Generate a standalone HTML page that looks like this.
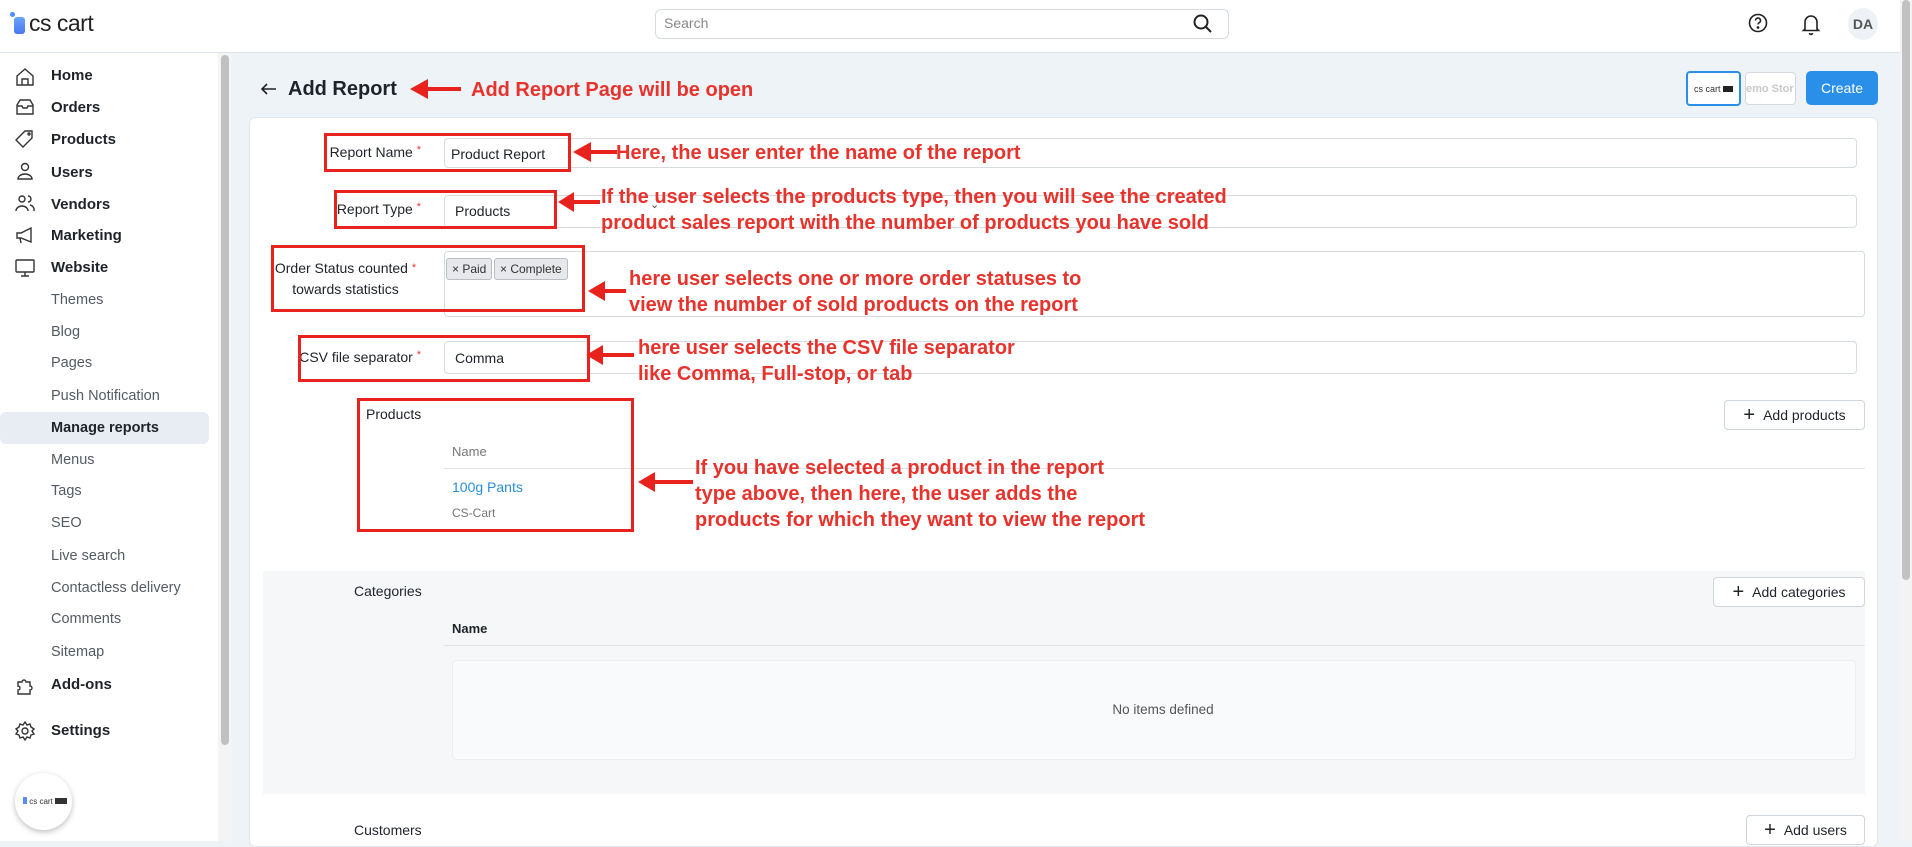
<!DOCTYPE html>
<html><head><meta charset="utf-8"><style>
*{box-sizing:border-box;margin:0;padding:0}
body{width:1912px;height:841px;overflow:hidden;background:#eef3f8;font-family:"Liberation Sans",sans-serif;color:#1f2329;position:relative}
.a{position:absolute}
.hdr{left:0;top:0;width:1900px;height:53px;background:#fff;border-bottom:1px solid #dde3ea}
.side{left:0;top:53px;width:232px;height:788px;background:#fff;border-right:1px solid #e3e8ee}
.nav{left:51px;font-size:15px;font-weight:bold;color:#1f2329}
.sub{left:51px;font-size:14.5px;color:#555b63}
.card{left:249px;top:117px;width:1629px;height:730px;background:#fff;border:1px solid #e1e6ec;border-radius:6px}
.inp{background:#fff;border:1px solid #d6dbe1;border-radius:4px}
.lbl{font-size:14px;color:#1f2329;text-align:right}
.lbl b{color:#e53935;font-weight:normal;font-size:11px;vertical-align:top}
.rb{border:3px solid #e8221c}
.ann{color:#e8322c;font-weight:bold;font-size:20px;line-height:26px;white-space:nowrap}
.btn{background:#fff;border:1px solid #cfd5dc;border-radius:4px;font-size:14px;color:#1f2329;display:flex;align-items:center;justify-content:center;gap:8px}
.btn span{font-size:20px;font-weight:300;line-height:14px}
.tag{background:#e6e8eb;border:1px solid #b9bec4;border-radius:3px;font-size:12px;color:#333;padding:3px 5px}
</style></head><body>
<div class="a hdr"></div>
<div class="a" style="left:10px;top:12px;width:5px;height:5px;border-radius:50%;background:#4c8df6"></div>
<div class="a" style="left:14px;top:17px;width:11px;height:17px;border-radius:3px;background:linear-gradient(#6aa4ff,#4a76ee)"></div>
<div class="a" style="left:29px;top:10px;font-size:23px;color:#222;letter-spacing:-.5px">cs cart</div>
<div class="a inp" style="left:655px;top:9px;width:574px;height:30px;border-radius:6px"></div>
<div class="a" style="left:664px;top:15px;font-size:14px;color:#888">Search</div>
<svg class="a" style="left:1192px;top:13px" width="22" height="22" viewBox="0 0 22 22" fill="none" stroke="#222" stroke-width="2"><circle cx="9" cy="9" r="6.5"/><path d="M14 14l5 5"/></svg>
<svg class="a" style="left:1747px;top:12px" width="22" height="22" viewBox="0 0 22 22" fill="none" stroke="#222" stroke-width="1.6"><circle cx="11" cy="11" r="8.5"/><path d="M8.5 8.5a2.5 2.5 0 1 1 3.5 2.3c-.7.4-1 .9-1 1.7"/><circle cx="11" cy="15.5" r=".6" fill="#222"/></svg>
<svg class="a" style="left:1800px;top:12px" width="22" height="24" viewBox="0 0 22 24" fill="none" stroke="#222" stroke-width="1.6"><path d="M5 17V10a6 6 0 0 1 12 0v7l1.5 1.5h-15z"/><path d="M9.5 21a1.5 1.5 0 0 0 3 0"/></svg>
<div class="a" style="left:1848px;top:8px;width:30px;height:32px;border-radius:50%;background:#eef2f6;font-size:14px;font-weight:bold;color:#555;display:flex;align-items:center;justify-content:center">DA</div>
<div class="a" style="left:1900px;top:0;width:12px;height:841px;background:#f3f3f3"></div>
<div class="a" style="left:1902px;top:0;width:8px;height:580px;background:#c2c2c2;border-radius:4px"></div>

<div class="a side"></div>
<div class="a" style="left:218px;top:53px;width:14px;height:788px;background:#f4f4f4"></div>
<div class="a" style="left:221px;top:55px;width:8px;height:690px;background:#c1c1c1;border-radius:4px"></div>
<div class="a" style="left:0;top:412px;width:209px;height:32px;background:#e8edf3;border-radius:6px"></div>
<svg class="a" style="left:14px;top:64px" width="22" height="700" viewBox="0 0 22 700" fill="none" stroke="#333" stroke-width="1.4">
<path d="M3 12l8-7 8 7v9H3z M8 21v-6h6v6"/>
<g transform="translate(0,32)"><path d="M3 9l3-5h10l3 5v9H3z M3 10h5l1 2h4l1-2h5"/></g>
<g transform="translate(0,64)"><path d="M11 3h7v7l-9 9-7-7z"/><circle cx="15" cy="6" r="1"/></g>
<g transform="translate(0,96)"><circle cx="11" cy="7" r="3.5"/><path d="M4 19a7 5 0 0 1 14 0z"/></g>
<g transform="translate(0,128)"><circle cx="8" cy="7" r="3"/><path d="M2 19a6 5 0 0 1 12 0M14 4a3 3 0 0 1 0 6M16 13a5 5 0 0 1 4 6"/></g>
<g transform="translate(0,160)"><path d="M3 9h4l10-5v14L7 14H3z M6 14l1 5"/></g>
<g transform="translate(0,192)"><rect x="2" y="4" width="18" height="12" rx="1"/><path d="M11 16v4M7 20h8"/></g>
<g transform="translate(0,610)"><path d="M4 8h4a2 2 0 1 1 4 0h4v4a2 2 0 1 1 0 4v4H4v-4a2 2 0 1 0 0-4z"/></g>
<g transform="translate(0,656)"><circle cx="11" cy="11" r="3"/><path d="M11 2l2 3 3-1 1 3 3 2-2 2 2 3-3 1-1 3-3-1-2 3-2-3-3 1-1-3-3-1 2-3-2-2 3-2 1-3 3 1z"/></g>
</svg>
<div class="a nav" style="top:67px">Home</div>
<div class="a nav" style="top:99px">Orders</div>
<div class="a nav" style="top:131px">Products</div>
<div class="a nav" style="top:164px">Users</div>
<div class="a nav" style="top:196px">Vendors</div>
<div class="a nav" style="top:227px">Marketing</div>
<div class="a nav" style="top:259px">Website</div>
<div class="a sub" style="top:292px">Themes</div>
<div class="a sub" style="top:324px">Blog</div>
<div class="a sub" style="top:355px">Pages</div>
<div class="a sub" style="top:388px">Push Notification</div>
<div class="a sub" style="top:420px;font-weight:bold;color:#1f2329">Manage reports</div>
<div class="a sub" style="top:452px">Menus</div>
<div class="a sub" style="top:483px">Tags</div>
<div class="a sub" style="top:515px">SEO</div>
<div class="a sub" style="top:548px">Live search</div>
<div class="a sub" style="top:580px">Contactless delivery</div>
<div class="a sub" style="top:611px">Comments</div>
<div class="a sub" style="top:644px">Sitemap</div>
<div class="a nav" style="top:676px">Add-ons</div>
<div class="a nav" style="top:722px">Settings</div>
<div class="a" style="left:15px;top:773px;width:57px;height:57px;border-radius:50%;background:#fff;box-shadow:0 2px 6px rgba(0,0,0,.25)"></div>
<div class="a" style="left:23px;top:797px;font-size:8px;color:#333"><span style="display:inline-block;width:4px;height:7px;background:#5b8ff5"></span> cs cart <span style="display:inline-block;width:12px;height:6px;background:#333"></span></div>

<svg class="a" style="left:259px;top:80px" width="20" height="18" viewBox="0 0 20 18" fill="none" stroke="#222" stroke-width="1.6"><path d="M17 9H3M8 4L3 9l5 5"/></svg>
<div class="a" style="left:288px;top:78px;font-size:20px;font-weight:bold">Add Report</div>
<div class="a" style="left:1686px;top:71px;width:55px;height:35px;border:2px solid #2a8fe8;border-radius:4px;background:#fff;font-size:9px;color:#333;padding-top:11px;text-align:center">cs cart <span style="display:inline-block;width:10px;height:6px;background:#222"></span></div>
<div class="a" style="left:1745px;top:72px;width:51px;height:33px;border:1px solid #d5d9de;border-radius:4px;background:#fff;font-size:11px;font-weight:bold;color:#c8c8c8;padding-top:10px;overflow:hidden;white-space:nowrap">emo Stor</div>
<div class="a" style="left:1806px;top:71px;width:72px;height:34px;background:#2a8fe8;border-radius:5px;color:#fff;font-size:14px;display:flex;align-items:center;justify-content:center">Create</div>

<div class="a card"></div>
<div class="a lbl" style="left:260px;top:144px;width:161px">Report Name <b>*</b></div>
<div class="a inp" style="left:444px;top:138px;width:1413px;height:30px"></div>
<div class="a" style="left:451px;top:146px;font-size:14px">Product Report</div>
<div class="a lbl" style="left:260px;top:201px;width:161px">Report Type <b>*</b></div>
<div class="a inp" style="left:444px;top:195px;width:1413px;height:33px"></div>
<div class="a" style="left:455px;top:203px;font-size:14px">Products</div>
<div class="a" style="left:650px;top:198px;font-size:11px;color:#444">⌄</div>
<div class="a lbl" style="left:260px;top:258px;width:161px;text-align:center;line-height:21px;padding-left:10px">Order Status counted <b>*</b><br>towards statistics</div>
<div class="a inp" style="left:444px;top:251px;width:1421px;height:66px"></div>
<div class="a tag" style="left:446px;top:258px">× Paid</div>
<div class="a tag" style="left:494px;top:258px">× Complete</div>
<div class="a lbl" style="left:260px;top:349px;width:161px">CSV file separator <b>*</b></div>
<div class="a inp" style="left:444px;top:341px;width:1413px;height:33px"></div>
<div class="a" style="left:455px;top:350px;font-size:14px">Comma</div>
<div class="a" style="left:650px;top:344px;font-size:11px;color:#444">⌄</div>

<div class="a" style="left:366px;top:406px;font-size:14px">Products</div>
<div class="a btn" style="left:1724px;top:400px;width:141px;height:30px"><span>+</span>Add products</div>
<div class="a" style="left:452px;top:444px;font-size:13px;color:#777">Name</div>
<div class="a" style="left:444px;top:468px;width:1421px;height:1px;background:#dfe3e8"></div>
<div class="a" style="left:452px;top:479px;font-size:14px;color:#2a8fd8">100g Pants</div>
<div class="a" style="left:452px;top:506px;font-size:12px;color:#777">CS-Cart</div>

<div class="a" style="left:263px;top:571px;width:1602px;height:223px;background:#f5f7f9"></div>
<div class="a" style="left:354px;top:583px;font-size:14px">Categories</div>
<div class="a btn" style="left:1713px;top:577px;width:152px;height:30px"><span>+</span>Add categories</div>
<div class="a" style="left:452px;top:621px;font-size:13px;font-weight:bold">Name</div>
<div class="a" style="left:444px;top:645px;width:1421px;height:1px;background:#dfe3e8"></div>
<div class="a" style="left:452px;top:660px;width:1404px;height:100px;background:#f9fafb;border:1px solid #eceff2;border-radius:4px"></div>
<div class="a" style="left:1100px;top:702px;width:126px;text-align:center;font-size:13.5px;color:#555">No items defined</div>
<div class="a" style="left:354px;top:822px;font-size:14px">Customers</div>
<div class="a btn" style="left:1746px;top:815px;width:119px;height:30px"><span>+</span>Add users</div>

<div class="a rb" style="left:324px;top:133px;width:247px;height:39px"></div>
<div class="a rb" style="left:334px;top:190px;width:223px;height:39px"></div>
<div class="a rb" style="left:271px;top:245px;width:314px;height:67px"></div>
<div class="a rb" style="left:298px;top:335px;width:292px;height:47px"></div>
<div class="a rb" style="left:357px;top:398px;width:277px;height:134px"></div>

<svg class="a" style="left:0;top:0" width="1912" height="841" fill="#e8221c" stroke="#e8221c">
<g stroke-width="4"><path d="M425 89H461"/><path d="M588 152H617"/><path d="M568 202H600"/><path d="M600 291H626"/><path d="M598 355H634"/><path d="M652 482H693"/></g>
<g stroke="none"><path d="M410 89l18-10v20z"/><path d="M573 152l18-10v20z"/><path d="M558 202l16-10v20z"/><path d="M588 291l17-10v20z"/><path d="M586 355l17-10v20z"/><path d="M638 482l17-10v20z"/></g>
</svg>
<div class="a ann" style="left:471px;top:77px">Add Report Page will be open</div>
<div class="a ann" style="left:616px;top:140px">Here, the user enter the name of the report</div>
<div class="a ann" style="left:601px;top:184px">If the user selects the products type, then you will see the created<br>product sales report with the number of products you have sold</div>
<div class="a ann" style="left:629px;top:266px">here user selects one or more order statuses to<br>view the number of sold products on the report</div>
<div class="a ann" style="left:638px;top:335px">here user selects the CSV file separator<br>like Comma, Full-stop, or tab</div>
<div class="a ann" style="left:695px;top:455px">If you have selected a product in the report<br>type above, then here, the user adds the<br>products for which they want to view the report</div>
</body></html>
